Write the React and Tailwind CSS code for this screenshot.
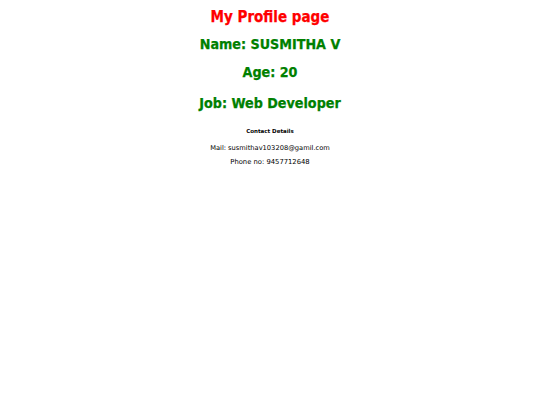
export default function App() {
  return (
    <div className="flex flex-col items-center text-center bg-white min-h-[405px] font-['DejaVu_Sans',sans-serif] pt-[9px]">
      <h1 className="text-[15px] leading-[16px] font-bold font-stretch-condensed text-[#ff0000] [-webkit-text-stroke:0.25px_#ff0000]">My Profile page</h1>
      <h2 className="mt-[11px] text-[14.2px] leading-[16px] font-bold font-stretch-condensed text-[#008000] [-webkit-text-stroke:0.25px_#008000]">Name: SUSMITHA V</h2>
      <h2 className="mt-[12px] text-[14.2px] leading-[16px] font-bold font-stretch-condensed text-[#008000] [-webkit-text-stroke:0.25px_#008000]">Age: 20</h2>
      <h2 className="mt-[15px] text-[14.2px] leading-[17px] font-bold font-stretch-condensed text-[#008000] [-webkit-text-stroke:0.25px_#008000]">Job: Web Developer</h2>
      <h3 className="mt-[15px] text-[5.5px] leading-[8px] font-bold text-black">Contact Details</h3>
      <p className="mt-[9px] text-[6.7px] leading-[9px] text-black">Mail: susmithav103208@gamil.com</p>
      <p className="mt-[5px] text-[6.8px] leading-[9px] text-black">Phone no: 9457712648</p>
    </div>
  );
}
